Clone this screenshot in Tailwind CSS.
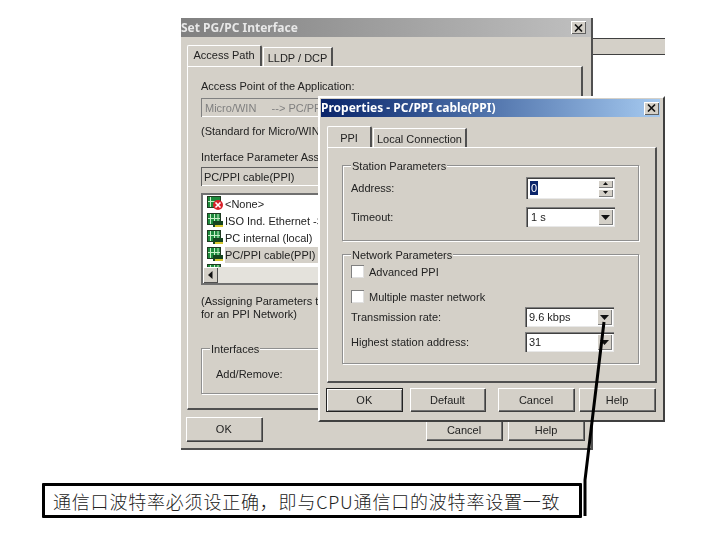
<!DOCTYPE html>
<html lang="zh">
<head>
  <meta charset="UTF-8" />
  <title>Set PG/PC Interface</title>
  <script src="https://cdn.jsdelivr.net/npm/@tailwindcss/browser@4"></script>
</head>
<body class="bg-white">
<div class="relative w-[716px] h-[537px] overflow-hidden bg-white text-[#222] text-[11px] leading-[14px] font-['Liberation_Sans',sans-serif]">

  <svg class="hidden">
    <symbol id="card" viewBox="0 0 17 15">
      <rect x="0.5" y="0.5" width="13" height="11" fill="#1d8a3c" stroke="#1e3a20" />
      <path d="M3.5 1v10M7.5 1v10M11 1v10M1 5.5h12" stroke="#c8f0c8" stroke-width="1" />
      <rect x="6" y="8" width="10" height="6" fill="#16451f" />
      <rect x="8" y="12" width="8" height="2" fill="#d8c830" />
    </symbol>
    <symbol id="cardx" viewBox="0 0 17 15">
      <rect x="0.5" y="0.5" width="13" height="11" fill="#1d8a3c" stroke="#1e3a20" />
      <path d="M3.5 1v10M1 5.5h8" stroke="#c8f0c8" stroke-width="1" />
      <circle cx="11" cy="9" r="5" fill="#d8202a" />
      <path d="M8.5 6.5l5 5M13.5 6.5l-5 5" stroke="#fff" stroke-width="1.6" />
    </symbol>
  </svg>

  <!-- band of the window behind -->
  <div class="absolute left-[592px] top-[38px] w-[73px] h-[17px] bg-[#d4d0c8] border-y border-[#404040]"></div>

  <!-- Set PG/PC Interface -->
  <div class="absolute left-[181px] top-[18px] w-[412px] h-[432px] bg-[#d4d0c8] border-r-2 border-b-2 border-[#505050] flex flex-col blur-[0.3px]">
    <div class="h-[19px] flex items-center justify-between pr-[5px] bg-gradient-to-r from-[#808080] to-[#c0c0c0]">
      <span class="text-[12px] font-bold text-[#e8e8e8] font-['Noto_Sans',sans-serif]">Set PG/PC Interface</span>
      <span class="w-[15px] h-[13px] bg-[#d4d0c8] flex items-center justify-center shadow-[inset_1px_1px_0_#fff,inset_-1px_-1px_0_#606060]">
        <svg width="9" height="8" viewBox="0 0 9 8"><path d="M1 0.5l7 7M8 0.5l-7 7" stroke="#111" stroke-width="1.6" /></svg>
      </span>
    </div>

    <div class="pl-[6px] pt-[8px] flex items-end">
      <div class="w-[75px] h-[21px] pt-[2px] text-center border-t border-l border-white rounded-t-[2px] border-r-2 border-r-[#505050]">Access Path</div>
      <div class="ml-px w-[70px] h-[19px] pt-[3px] text-center border-t border-l border-white border-r-2 border-r-[#505050]">LLDP / DCP</div>
    </div>

    <div class="ml-[6px] w-[396px] h-[344px] border-t border-l border-white border-r-2 border-b-2 border-r-[#505050] border-b-[#505050] pl-[13px] pt-[12px]">
      <div>Access Point of the Application:</div>
      <div class="mt-[5px] w-[200px] h-[19px] pl-[4px] pt-[3px] text-[#808080] whitespace-pre shadow-[inset_1px_1px_0_#808080,inset_-1px_-1px_0_#fff]">Micro/WIN     --&gt; PC/PPI cable(PPI)</div>
      <div class="mt-[7px]">(Standard for Micro/WIN)</div>
      <div class="mt-[12px]">Interface Parameter Assignment Used:</div>
      <div class="mt-[3px] w-[200px] h-[19px] pl-[3px] pt-[3px] shadow-[inset_1px_1px_0_#606060,inset_-1px_-1px_0_#fff]">PC/PPI cable(PPI)</div>

      <div class="mt-[7px] w-[200px] h-[92px] bg-white border-2 border-[#707070] flex flex-col overflow-hidden">
        <div class="flex-1 overflow-hidden pl-[4px]">
          <div class="flex items-center h-[17px]"><svg class="w-[17px] h-[15px] mr-[1px]"><use href="#cardx" /></svg>&lt;None&gt;</div>
          <div class="flex items-center h-[17px]"><svg class="w-[17px] h-[15px] mr-[1px]"><use href="#card" /></svg><span class="whitespace-nowrap">ISO Ind. Ethernet -&gt;</span></div>
          <div class="flex items-center h-[17px]"><svg class="w-[17px] h-[15px] mr-[1px]"><use href="#card" /></svg>PC internal (local)</div>
          <div class="flex items-center h-[17px]"><svg class="w-[17px] h-[15px] mr-[1px]"><use href="#card" /></svg><span class="bg-[#d4d0c8] w-[110px] h-[16px] pt-px">PC/PPI cable(PPI)</span></div>
          <div class="flex items-center h-[17px]"><svg class="w-[17px] h-[15px] mr-[1px]"><use href="#card" /></svg>PLCSIM(ISO)</div>
        </div>
        <div class="h-[16px] flex bg-[#e4e2dc]">
          <span class="w-[15px] h-[16px] bg-[#d4d0c8] flex items-center justify-center shadow-[inset_1px_1px_0_#fff,inset_-1px_-1px_0_#505050]">
            <svg width="5" height="8" viewBox="0 0 5 8"><path d="M4.5 0v8L0 4z" fill="#111" /></svg>
          </span>
        </div>
      </div>

      <div class="mt-[9px]">(Assigning Parameters to</div>
      <div class="mt-[-1px]">for an PPI Network)</div>

      <div class="relative mt-[27px] w-[300px] h-[46px] border border-[#909090] shadow-[1px_1px_0_#fff,inset_1px_1px_0_#fff] pl-[14px] pt-[18px]">
        <span class="absolute left-[8px] top-[-7px] bg-[#d4d0c8] px-px">Interfaces</span>
        Add/Remove:
      </div>
    </div>

    <div class="pl-[5px] pt-[7px] flex">
      <div class="w-[76px] h-[24px] flex items-center justify-center tracking-wide shadow-[inset_1px_1px_0_#fff,inset_-1px_-1px_0_#707070,1px_1px_0_#404040]">OK</div>
      <div class="ml-[164px] mt-[3px] w-[76px] h-[20px] flex items-center justify-center shadow-[inset_1px_1px_0_#fff,inset_-1px_-1px_0_#707070,1px_1px_0_#404040]">Cancel</div>
      <div class="ml-[6px] mt-[3px] w-[76px] h-[20px] flex items-center justify-center shadow-[inset_1px_1px_0_#fff,inset_-1px_-1px_0_#707070,1px_1px_0_#404040]">Help</div>
    </div>
  </div>

  <!-- Properties -->
  <div class="absolute left-[318px] top-[96px] w-[347px] h-[326px] bg-[#d4d0c8] border-t-2 border-l-2 border-white border-r-2 border-b-2 border-r-[#404040] border-b-[#404040] pl-px pt-px flex flex-col blur-[0.3px]">
    <div class="w-[339px] h-[18px] flex items-center justify-between pr-[1px] bg-gradient-to-r from-[#0a246a] to-[#a6caf0]">
      <span class="text-[12px] font-bold text-white font-['Noto_Sans',sans-serif]">Properties - PC/PPI cable(PPI)</span>
      <span class="w-[15px] h-[13px] bg-[#d4d0c8] flex items-center justify-center shadow-[inset_1px_1px_0_#fff,inset_-1px_-1px_0_#606060]">
        <svg width="9" height="8" viewBox="0 0 9 8"><path d="M1 0.5l7 7M8 0.5l-7 7" stroke="#111" stroke-width="1.6" /></svg>
      </span>
    </div>

    <div class="pl-[6px] pt-[9px] flex items-end">
      <div class="w-[45px] h-[21px] pt-[4px] text-center border-t border-l border-white rounded-t-[2px] border-r-2 border-r-[#505050]">PPI</div>
      <div class="ml-px w-[94px] h-[19px] pt-[3px] text-center whitespace-nowrap border-t border-l border-white border-r-2 border-r-[#505050]">Local Connection</div>
    </div>

    <div class="ml-[6px] w-[330px] h-[236px] border-t border-l border-white border-r-2 border-b-2 border-r-[#505050] border-b-[#505050] pl-[14px] pt-[17px]">
      <div class="relative w-[297px] h-[76px] border border-[#909090] shadow-[1px_1px_0_#fff,inset_1px_1px_0_#fff] pl-[8px] pr-[23px]">
        <span class="absolute left-[8px] top-[-7px] bg-[#d4d0c8] px-px">Station Parameters</span>
        <div class="mt-[11px] h-[22px] flex items-center justify-between">
          <span>Address:</span>
          <div class="w-[89px] h-[22px] bg-white flex items-center justify-between pl-[4px] pr-[2px] shadow-[inset_1px_1px_0_#808080,inset_2px_2px_0_#404040,inset_-1px_-1px_0_#e8e8e8]">
            <span class="bg-[#0a246a] text-white px-px">0</span>
            <span class="flex flex-col gap-px">
              <span class="w-[15px] h-[8px] bg-[#d4d0c8] flex items-center justify-center shadow-[inset_1px_1px_0_#fff,inset_-1px_-1px_0_#808080]"><svg width="5" height="3" viewBox="0 0 5 3"><path d="M2.5 0L5 3H0z" fill="#111" /></svg></span>
              <span class="w-[15px] h-[8px] bg-[#d4d0c8] flex items-center justify-center shadow-[inset_1px_1px_0_#fff,inset_-1px_-1px_0_#808080]"><svg width="5" height="3" viewBox="0 0 5 3"><path d="M2.5 3L5 0H0z" fill="#111" /></svg></span>
            </span>
          </div>
        </div>
        <div class="mt-[8px] h-[20px] flex items-center justify-between">
          <span>Timeout:</span>
          <div class="w-[89px] h-[20px] bg-white flex items-center justify-between pl-[5px] pr-[2px] shadow-[inset_1px_1px_0_#808080,inset_2px_2px_0_#404040,inset_-1px_-1px_0_#e8e8e8]">
            <span>1 s</span>
            <span class="w-[15px] h-[16px] bg-[#d4d0c8] flex items-center justify-center shadow-[inset_1px_1px_0_#fff,inset_-1px_-1px_0_#808080]"><svg width="9" height="5" viewBox="0 0 9 5"><path d="M0 0h9L4.5 5z" fill="#111" /></svg></span>
          </div>
        </div>
      </div>

      <div class="relative mt-[13px] w-[297px] h-[110px] border border-[#909090] shadow-[1px_1px_0_#fff,inset_1px_1px_0_#fff] pl-[8px] pr-[24px]">
        <span class="absolute left-[8px] top-[-7px] bg-[#d4d0c8] px-px">Network Parameters</span>
        <div class="mt-[10px] h-[13px] flex items-center">
          <span class="w-[13px] h-[13px] bg-white mr-[5px] shadow-[inset_1px_1px_0_#808080,inset_-1px_-1px_0_#e0e0e0]"></span>Advanced PPI
        </div>
        <div class="mt-[12px] h-[13px] flex items-center">
          <span class="w-[13px] h-[13px] bg-white mr-[5px] shadow-[inset_1px_1px_0_#808080,inset_-1px_-1px_0_#e0e0e0]"></span>Multiple master network
        </div>
        <div class="mt-[4px] h-[20px] flex items-center justify-between">
          <span>Transmission rate:</span>
          <div class="w-[89px] h-[20px] bg-white flex items-center justify-between pl-[4px] pr-[2px] shadow-[inset_1px_1px_0_#808080,inset_2px_2px_0_#404040,inset_-1px_-1px_0_#e8e8e8]">
            <span>9.6 kbps</span>
            <span class="w-[15px] h-[16px] bg-[#d4d0c8] flex items-center justify-center shadow-[inset_1px_1px_0_#fff,inset_-1px_-1px_0_#808080]"><svg width="9" height="5" viewBox="0 0 9 5"><path d="M0 0h9L4.5 5z" fill="#111" /></svg></span>
          </div>
        </div>
        <div class="mt-[5px] h-[20px] flex items-center justify-between">
          <span>Highest station address:</span>
          <div class="w-[89px] h-[20px] bg-white flex items-center justify-between pl-[4px] pr-[2px] shadow-[inset_1px_1px_0_#808080,inset_2px_2px_0_#404040,inset_-1px_-1px_0_#e8e8e8]">
            <span>31</span>
            <span class="w-[15px] h-[16px] bg-[#d4d0c8] flex items-center justify-center shadow-[inset_1px_1px_0_#fff,inset_-1px_-1px_0_#808080]"><svg width="9" height="5" viewBox="0 0 9 5"><path d="M0 0h9L4.5 5z" fill="#111" /></svg></span>
          </div>
        </div>
      </div>
    </div>

    <div class="pl-[5px] pt-[5px] flex">
      <div class="w-[77px] h-[24px] flex items-center justify-center tracking-wide border border-[#222] shadow-[inset_1px_1px_0_#fff,inset_-1px_-1px_0_#808080]">OK</div>
      <div class="ml-[7px] w-[75px] h-[23px] flex items-center justify-center shadow-[inset_1px_1px_0_#fff,inset_-1px_-1px_0_#707070,1px_1px_0_#404040]">Default</div>
      <div class="ml-[13px] w-[76px] h-[23px] flex items-center justify-center shadow-[inset_1px_1px_0_#fff,inset_-1px_-1px_0_#707070,1px_1px_0_#404040]">Cancel</div>
      <div class="ml-[5px] w-[76px] h-[23px] flex items-center justify-center shadow-[inset_1px_1px_0_#fff,inset_-1px_-1px_0_#707070,1px_1px_0_#404040]">Help</div>
    </div>
  </div>

  <!-- callout -->
  <div class="absolute left-[42px] top-[483px] w-[540px] h-[35px] bg-white border-[3px] border-black rounded-[1px] pl-[8px] flex items-center text-[18px] tracking-[0.8px] text-[#222] whitespace-nowrap font-['Noto_Sans_CJK_SC',sans-serif] font-light">通信口波特率必须设正确&#xFF0C;即与CPU通信口的波特率设置一致</div>

  <svg class="absolute left-0 top-0" width="716" height="537" viewBox="0 0 716 537" fill="none">
    <polyline points="604,322 585,480 585,516" stroke="#000" stroke-width="3" />
  </svg>
</div>
</body>
</html>
